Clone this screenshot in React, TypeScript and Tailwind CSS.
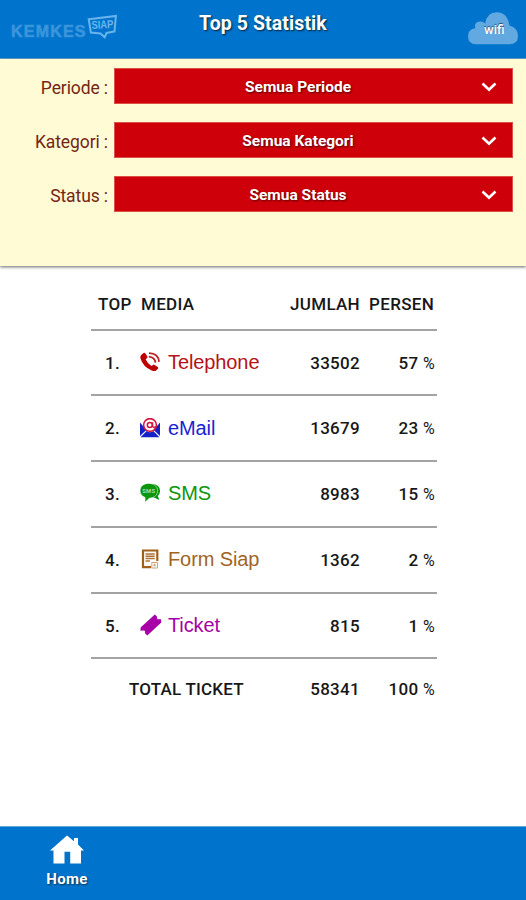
import type { ReactNode } from "react";

const FILTERS = [
  { label: "Periode :", value: "Semua Periode" },
  { label: "Kategori :", value: "Semua Kategori" },
  { label: "Status :", value: "Semua Status" },
];

function PhoneIcon() {
  return (
    <svg viewBox="0 0 20 20" className="h-5 w-5" fill="none">
      <path
        d="M1.2 2.9 3.6.9Q4.6.3 5.3 1.3L7.3 4.6Q7.7 5.5 6.9 6.2L5.6 7.3Q7.2 11.3 11.5 14L13 12.9Q13.8 12.3 14.6 12.9L17.8 15.1Q18.6 15.8 17.9 16.8L16.2 18.5Q14.7 19.6 11.7 18.5 3 15 .5 6.6-.1 4.1 1.2 2.9Z"
        fill="#bd0000"
      />
      <path d="M9 1.2Q18.5 1.5 19 9.9M8.8 4.6Q14.8 5.2 15.5 10.6" stroke="#bd2020" strokeWidth="1.8" />
    </svg>
  );
}

function MailIcon() {
  return (
    <svg viewBox="0 0 20 20" className="h-5 w-5" fill="none">
      <path d="M0 4.5 6.3 11.9 0 18ZM20 4.5 13.7 11.9 20 18ZM.5 19.3 6.7 13Q10 15.6 13.3 13L19.5 19.3Z" fill="#1420c8" />
      <circle cx="10" cy="7" r="6.4" fill="#fff" stroke="#d5143c" strokeWidth="1.6" />
      <circle cx="9.8" cy="7" r="2.5" stroke="#d5143c" strokeWidth="1.5" />
      <path d="M12.6 4.2V8.2Q13.5 10.3 15.6 8.6" stroke="#d5143c" strokeWidth="1.4" />
    </svg>
  );
}

function SmsIcon() {
  return (
    <svg viewBox="0 0 20 20" className="h-5 w-5">
      <path d="M13 .8Q20.3 2.2 20 8.4 19.8 11.3 17.9 12.9L19.3 17 14.5 14.8 12 14Z" fill="#0c960c" />
      <path
        d="M8.7.4C13.8.4 17.6 3.2 17.6 7.8S13.8 15 9.3 15.2L5 19.2 5.1 14.4C2 13.4.1 11 .1 7.8.1 3.2 3.7.4 8.7.4Z"
        fill="#0c960c"
        stroke="#fff"
        strokeWidth=".5"
      />
      <text x="8.8" y="9.8" textAnchor="middle" fontSize="5.8" fontWeight="700" fill="#a9dca9" fontFamily="Roboto, sans-serif">
        SMS
      </text>
    </svg>
  );
}

function FormIcon() {
  return (
    <svg viewBox="0 0 20 20" className="h-5 w-5" fill="none" stroke="#a0601a">
      <path d="M17.3 12V1.5H3V18.2H11" strokeWidth="2.2" />
      <path d="M5.5 5H14.7M5.5 7.3H14.7M5.5 9.6H14.7M5.5 11.9H10" stroke="#ad7433" strokeWidth="1.5" />
      <path d="M11.8 13.5H17.5V19H11.8ZM13 16.2H16M14.6 14.6V17.5" stroke="#cda47a" strokeWidth="1" />
    </svg>
  );
}

function TicketIcon() {
  return (
    <svg viewBox="0 0 22 22" className="h-[22px] w-[22px]" fill="#a600a6">
      <path d="M.6 13.4 14.8.5 17 2.5Q16.4 5.4 18.8 5.3L21 5.2 21.3 8.6 7.3 21.4 4.8 18.9Q5.8 16 3 16.5L.5 16.7Z" />
    </svg>
  );
}

type Media = {
  name: string;
  icon: ReactNode;
  color: string;
  total: number;
  percent: number;
};

const MEDIA: Media[] = [
  { name: "Telephone", icon: <PhoneIcon />, color: "text-[#b31217]", total: 33502, percent: 57 },
  { name: "eMail", icon: <MailIcon />, color: "text-[#1923d2]", total: 13679, percent: 23 },
  { name: "SMS", icon: <SmsIcon />, color: "text-[#0c960c]", total: 8983, percent: 15 },
  { name: "Form Siap", icon: <FormIcon />, color: "text-[#a0651f]", total: 1362, percent: 2 },
  { name: "Ticket", icon: <TicketIcon />, color: "text-[#a600a6]", total: 815, percent: 1 },
];

function Header() {
  return (
    <header className="grid h-[59px] shrink-0 grid-cols-[1fr_auto_1fr] items-start border-b border-[#5fa9d4] bg-[#0074cc]">
      <div className="flex pl-[11px] text-[#3a95dc]">
        <span className="mt-[22px] w-[76px] font-['Liberation_Sans',sans-serif] text-[16px] leading-5 font-bold tracking-[1.2px] [-webkit-text-stroke:0.6px_currentColor]">
          KEMKES
        </span>
        <svg viewBox="0 0 32 26" className="mt-[14px] h-[26px] w-8 text-[#68b4ec]" fill="none">
          <path d="M1.7 5.2 28.9 2 27.5 17.5 19.5 19 17.7 23.3 13.5 19.5 3.9 18.5Z" stroke="currentColor" strokeWidth="2" />
          <text
            x="4.5"
            y="14.5"
            fontSize="11.5"
            fontWeight="700"
            fill="currentColor"
            textLength="22"
            lengthAdjust="spacingAndGlyphs"
            fontFamily="Liberation Sans, sans-serif"
            transform="rotate(-3 15 12)"
          >
            SIAP
          </text>
        </svg>
      </div>
      <h1 className="mt-3 text-[19.5px] leading-6 font-bold tracking-[0.1px] text-white [text-shadow:1px_1px_2px_#000b]">
        Top 5 Statistik
      </h1>
      <div className="relative mt-3 mr-2 h-[33px] w-[50px] justify-self-end">
        <svg viewBox="0 0 50 33" className="h-full w-full" fill="#62a9e2">
          <path d="M9 32.3Q0 32.3 0 24.4 0 17 7.3 16.3 5.8 10.3 11.5 9.6 15 9.1 17.2 11.5 18.5.6 28.7.2 39.5.3 41.4 13.5 50 15.8 50 24 50 32.3 41.3 32.3Z" />
        </svg>
        <span className="absolute top-[10px] left-4 text-[13px] leading-4 font-medium text-white [text-shadow:0_-1px_1px_#0009]">
          wifi
        </span>
      </div>
    </header>
  );
}

function Filters() {
  return (
    <section className="flex h-[207px] shrink-0 flex-col gap-[18px] bg-[#fffbd5] pt-[9px] pr-[13px] shadow-[0_1px_3px_#0009]">
      {FILTERS.map((filter) => (
        <div key={filter.label} className="flex h-9 items-center">
          <span className="w-[114px] pt-[5px] pr-[6px] text-right text-[17.5px] tracking-[-0.1px] text-[#752515]">{filter.label}</span>
          <button className="flex h-9 flex-1 items-center border border-[#dd5045] bg-[#ce000a] pr-[15px] text-white">
            <span className="flex-1 pt-[3px] text-center text-[15.5px] font-bold [text-shadow:1px_1px_2px_#0009]">
              {filter.value}
            </span>
            <svg viewBox="0 0 16 10" className="mt-0.5 h-[10px] w-4" fill="none">
              <path d="M1.5 1.5 8 7.8 14.5 1.5" stroke="currentColor" strokeWidth="2.6" />
            </svg>
          </button>
        </div>
      ))}
    </section>
  );
}

function StatTable() {
  return (
    <section className="ml-[91px] flex w-[346px] flex-col text-[17px] font-medium tracking-[0.3px] text-[#171717]">
      <div className="flex h-[64.5px] items-center border-b-2 border-[#a3a3a3] pt-[14px]">
        <span className="w-[50px] pl-[7px]">TOP</span>
        <span className="flex-1">MEDIA</span>
        <span>JUMLAH</span>
        <span className="w-[77px] pr-[3px] text-right">PERSEN</span>
      </div>
      {MEDIA.map((media, index) => (
        <div key={media.name} className="flex h-[65.75px] items-center border-b-2 border-[#a3a3a3]">
          <span className="w-[49px] pt-[2px] pl-[14px]">{index + 1}.</span>
          <span className="flex w-7 items-center pb-px">{media.icon}</span>
          <span className={`flex-1 pb-px font-['Liberation_Sans',sans-serif] text-[20px] font-normal tracking-[-0.1px] ${media.color}`}>
            {media.name}
          </span>
          <span className="pt-[2px]">{media.total}</span>
          <span className="w-[77px] pt-[2px] pr-[2px] text-right">
            {media.percent} <span className="text-[16px] font-normal">%</span>
          </span>
        </div>
      ))}
      <div className="flex h-[60px] items-center">
        <span className="flex-1 pl-[38px] tracking-[0.2px]">TOTAL TICKET</span>
        <span>58341</span>
        <span className="w-[77px] pr-[2px] text-right">
          100 <span className="text-[16px] font-normal">%</span>
        </span>
      </div>
    </section>
  );
}

export default function App() {
  return (
    <div className="flex h-[900px] w-[526px] flex-col overflow-hidden bg-white font-[Roboto,sans-serif]">
      <Header />
      <Filters />
      <StatTable />
      <nav className="mt-auto h-[74px] shrink-0 border-t border-[#5fa9d4] bg-[#0074cc] text-white">
        <button className="ml-[42px] flex w-[50px] flex-col items-center pt-2">
          <svg viewBox="0 0 34 30" className="h-[30px] w-[34px]" fill="currentColor">
            <path d="M17 .5 24 6.2V3H28V9.5L34 15.5H31V28.5H20.2V16.8H14.5V28.5H3.5V15.5H0Z" />
          </svg>
          <span className="mt-1 text-[15px] leading-5 font-bold tracking-[0.3px] [text-shadow:1px_1px_2px_#0009]">Home</span>
        </button>
      </nav>
    </div>
  );
}
